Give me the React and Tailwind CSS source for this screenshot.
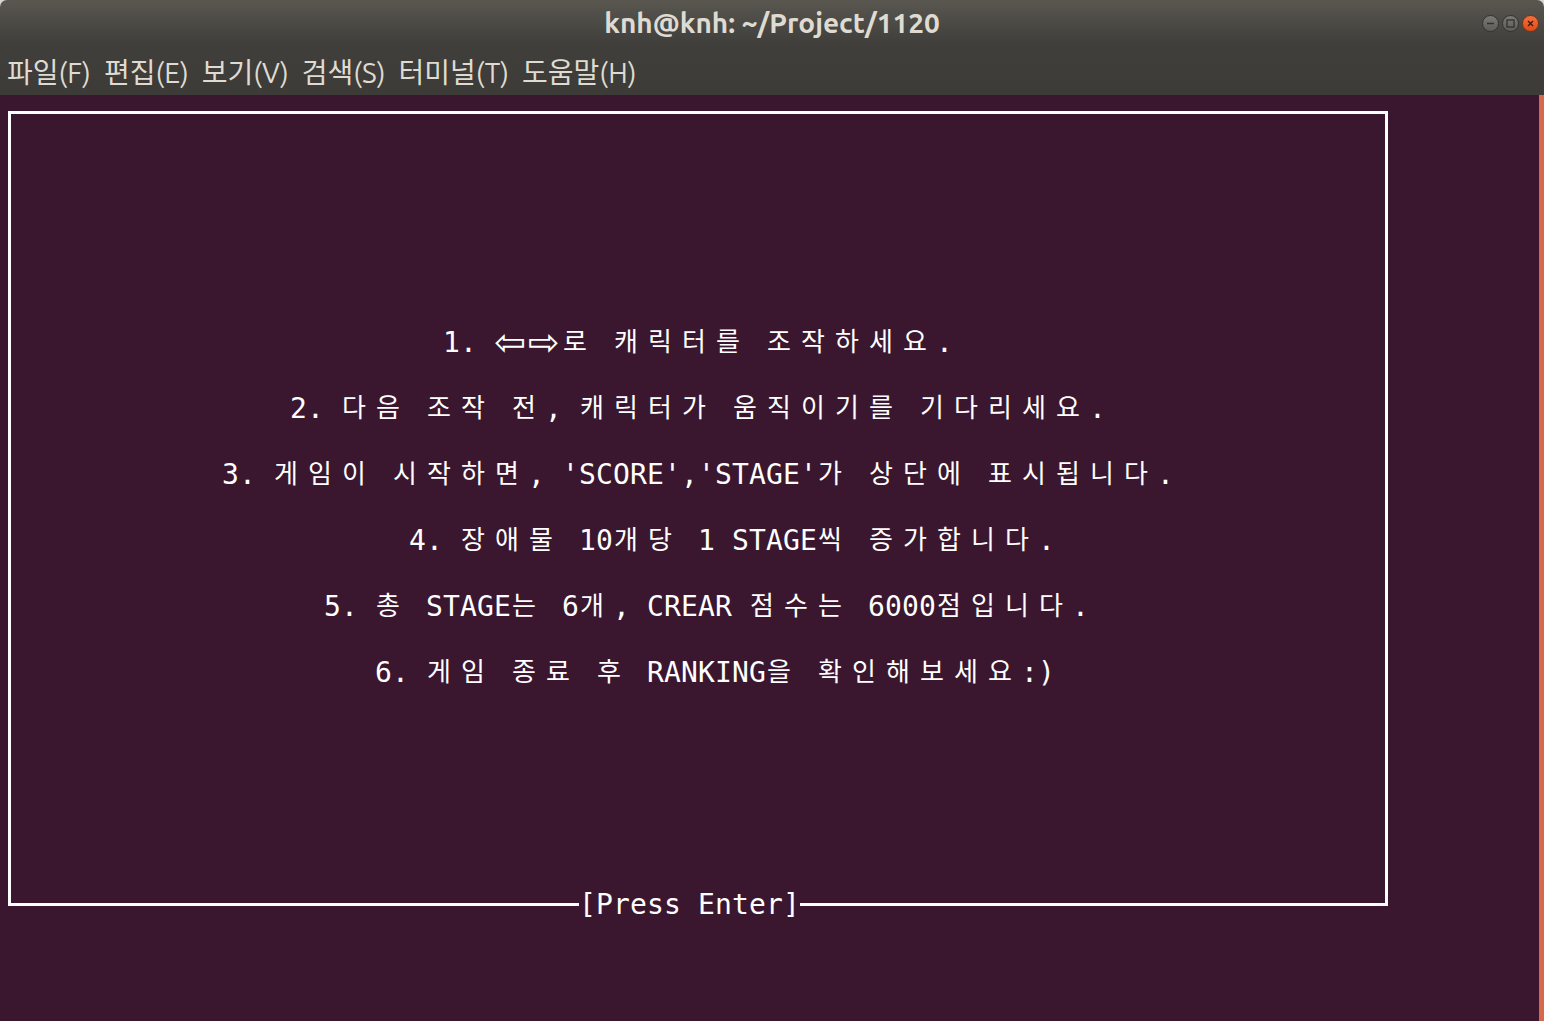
const LINES = [
  "                          1. ⇦⇨로 캐릭터를 조작하세요.",
  "                 2. 다음 조작 전, 캐릭터가 움직이기를 기다리세요.",
  "             3. 게임이 시작하면, 'SCORE','STAGE'가 상단에 표시됩니다.",
  "                        4. 장애물 10개당 1 STAGE씩 증가합니다.",
  "                   5. 총 STAGE는 6개, CREAR 점수는 6000점입니다.",
  "                      6. 게임 종료 후 RANKING을 확인해보세요:)",
];

const MENU = ["파일(F)", "편집(E)", "보기(V)", "검색(S)", "터미널(T)", "도움말(H)"];

const isArrow = (ch) => /[\u2190-\u21ff]/.test(ch);
const isWide = (ch) => /[\u2190-\u21ff\u1100-\u11ff\uac00-\ud7a3]/.test(ch);

// one terminal cell: 17px, or 34px for wide (hangul / arrow) chars
function Cells({ text }) {
  return Array.from(text).map((ch, i) => {
    let cls = "w-[17px] text-center text-[28px]";
    if (isArrow(ch)) cls = "w-[34px] text-left text-[38px] font-['DejaVu_Sans',sans-serif] leading-[33px]";
    else if (isWide(ch)) cls = "w-[34px] text-left pl-px text-[26px]";
    return (
      <span key={i} className={`inline-block shrink-0 ${cls}`}>
        {ch === " " ? "\u00a0" : ch}
      </span>
    );
  });
}

function WinButton({ kind }) {
  if (kind === "close") {
    return (
      <div className="w-[17px] h-[17px] rounded-full bg-gradient-to-b from-[#f3703d] to-[#df4a16] border border-[#7a3418] flex items-center justify-center">
        <svg width="9" height="9" viewBox="0 0 9 9">
          <path d="M2 2 L7 7 M7 2 L2 7" stroke="#3b1a10" strokeWidth="1.4" />
        </svg>
      </div>
    );
  }
  return (
    <div className="w-[17px] h-[17px] rounded-full bg-gradient-to-b from-[#7c7a75] to-[#5e5c58] border border-[#34332f] flex items-center justify-center">
      <svg width="11" height="11" viewBox="0 0 11 11">
        {kind === "min" ? (
          <path d="M2 5.5 H9" stroke="#33322e" strokeWidth="1.5" />
        ) : (
          <rect x="2" y="2" width="7" height="7" fill="none" stroke="#33322e" strokeWidth="1.3" />
        )}
      </svg>
    </div>
  );
}

export default function App() {
  return (
    <div className="w-[1544px] h-[1021px] bg-[#d9d6d2] overflow-hidden">
      {/* title + menu */}
      <div className="h-[95px] rounded-t-[7px] bg-gradient-to-b from-[#5a5751] via-[#403f3b] via-[45%] to-[#3c3b37] flex flex-col">
        <div className="relative h-[46px] flex items-center justify-center">
          <span className="font-['Ubuntu','Noto_Sans',sans-serif] font-bold text-[28px] text-[#dfdbd2]">
            knh@knh: ~/Project/1120
          </span>
          <div className="absolute right-[5px] top-[15px] flex gap-[3px]">
            <WinButton kind="min" />
            <WinButton kind="max" />
            <WinButton kind="close" />
          </div>
        </div>
        <div className="flex items-center gap-[13px] pl-[7px] pt-[4px] h-[49px] text-[28px] text-[#dfdbd2] font-['Ubuntu','Noto_Sans','Noto_Sans_CJK_KR',sans-serif]">
          {MENU.map((m) => (
            <span key={m}>{m}</span>
          ))}
        </div>
      </div>

      {/* terminal */}
      <div className="flex h-[926px]">
        <div className="flex-1 bg-[#3a172f] text-white font-['DejaVu_Sans_Mono','Noto_Sans_CJK_KR',monospace] pt-[16px] pl-[8px]">
          <div className="w-[1380px] h-[795px] border-t-[3px] border-x-[3px] border-white flex flex-col">
            <div className="-ml-[10px] pt-[212px] flex flex-col gap-[33px]">
              {LINES.map((l, i) => (
                <div key={i} className="h-[33px] leading-[33px] flex whitespace-pre">
                  <Cells text={l} />
                </div>
              ))}
            </div>
            <div className="flex-1" />
            <div className="-mx-[3px] h-[3px] flex items-center">
              <div className="w-[571px] h-[3px] bg-white" />
              <div className="h-[33px] leading-[33px] flex whitespace-pre">
                <Cells text="[Press Enter]" />
              </div>
              <div className="flex-1 h-[3px] bg-white" />
            </div>
          </div>
        </div>
        <div className="w-[5px] bg-[#d5694a]" />
      </div>
    </div>
  );
}
